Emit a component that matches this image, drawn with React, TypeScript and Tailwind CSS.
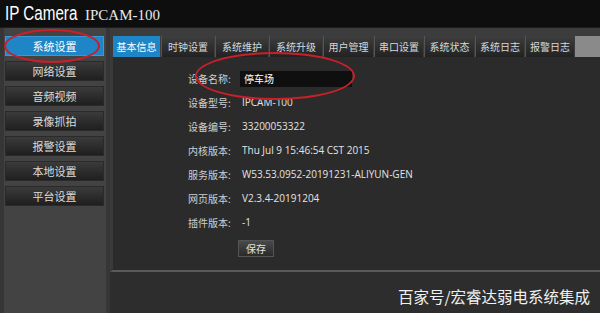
import React from "react";

const menus = ["系统设置", "网络设置", "音频视频", "录像抓拍", "报警设置", "本地设置", "平台设置"];
const tabs = [
  { name: "基本信息", w: "w-[47px]" },
  { name: "时钟设置", w: "w-[53px]" },
  { name: "系统维护", w: "w-[53px]" },
  { name: "系统升级", w: "w-[53px]" },
  { name: "用户管理", w: "w-[50px]" },
  { name: "串口设置", w: "w-[49px]" },
  { name: "系统状态", w: "w-[50px]" },
  { name: "系统日志", w: "w-[49px]" },
  { name: "报警日志", w: "w-[49px]" },
];
const rows = [
  { label: "设备型号:", value: "IPCAM-100" },
  { label: "设备编号:", value: "33200053322" },
  { label: "内核版本:", value: "Thu Jul 9 15:46:54 CST 2015" },
  { label: "服务版本:", value: "W53.53.0952-20191231-ALIYUN-GEN" },
  { label: "网页版本:", value: "V2.3.4-20191204" },
  { label: "插件版本:", value: "-1" },
];

const cjk = "font-['Noto_Sans_CJK_SC',sans-serif]";

export default function App() {
  return (
    <div className="relative w-[600px] h-[313px] overflow-hidden bg-[#2d2d2d] flex flex-col">
      {/* Header */}
      <div className="h-[28px] shrink-0 bg-[#0e0e0e] border-b border-[#1c1c1c] flex items-end pb-[4px] pl-[5px]">
        <span className="w-[80px] inline-block whitespace-nowrap origin-left scale-x-[0.76] text-[20px] leading-none text-white font-['Liberation_Sans',sans-serif]">
          IP Camera
        </span>
        <span className="text-[15px] leading-none text-[#e8e8e8] font-['Liberation_Serif',serif]">IPCAM-100</span>
      </div>

      <div className="flex flex-1 min-h-0">
        {/* Sidebar */}
        <div className="w-[110px] shrink-0 bg-[#434343] border-l-[4px] border-r-[4px] border-[#363636] pt-[8px] pl-[1px] pr-[2px] flex flex-col gap-[5px]">
          {menus.map((m, i) => (
            <div
              key={m}
              className={`h-[20px] flex items-center justify-center text-[11px] ${cjk} ${
                i === 0
                  ? "bg-[#1e86c6] text-white border border-[#3a9ad6]"
                  : "bg-gradient-to-b from-[#3b3b3b] to-[#1f1f1f] text-[#dcdcdc] border border-[#2a2a2a]"
              }`}
            >
              {m}
            </div>
          ))}
        </div>

        {/* Main */}
        <div className="flex-1 flex flex-col bg-[#2d2d2d]">
          <div className="h-[29px] shrink-0 bg-[#3c3c3c] flex items-end pl-[3px]">
            {tabs.map((t, i) => (
              <div
                key={t.name}
                className={`${t.w} h-[21px] mr-[1px] flex items-center justify-center text-[10px] ${cjk} ${
                  i === 0
                    ? "bg-[#1e86c6] text-white"
                    : "bg-gradient-to-b from-[#3e3e3e] to-[#222] text-[#d8d8d8] border-l border-[#555]"
                }`}
              >
                {t.name}
              </div>
            ))}
            <div className="flex-1 h-[21px] bg-[#8a8a8a]" />
          </div>

          <div className="h-[215px] shrink-0 bg-[#2b2b2b] border-l-[3px] border-[#3a3a3a] border-b-2 border-b-[#5a5a5a] pt-[13px] pl-[75px]">
            <div className={`flex items-center h-[17px] text-[10px] ${cjk}`}>
              <span className="w-[52px] text-[#cfcfcf]">设备名称:</span>
              <div className="w-[112px] h-[16px] bg-[#0f0f0f] text-white flex items-center px-[4px]">停车场</div>
            </div>
            {rows.map((r) => (
              <div key={r.label} className="flex items-center h-[17px] mt-[7px] text-[10px]">
                <span className={`w-[54px] text-[#cfcfcf] ${cjk}`}>{r.label}</span>
                <span className="text-[#e4e4e4] font-['Open_Sans',sans-serif]">{r.value}</span>
              </div>
            ))}
            <div className="mt-[9px] ml-[50px]">
              <div className={`w-[36px] h-[17px] bg-gradient-to-b from-[#4a4a4a] to-[#2a2a2a] border border-[#555] text-[#e0e0e0] text-[10px] ${cjk} flex items-center justify-center`}>
                保存
              </div>
            </div>
          </div>

          <div className="flex-1 flex items-end justify-end pr-[10px] pb-[9px]">
            <span className={`text-[15.5px] leading-none text-[#f0f0f0] ${cjk}`}>百家号/宏睿达弱电系统集成</span>
          </div>
        </div>
      </div>

      {/* Red annotation ellipses */}
      <div className="absolute left-[4px] top-[29px] w-[96px] h-[34px] rounded-[50%] border-2 border-[#c8202a]" />
      <div className="absolute left-[195px] top-[52px] w-[160px] h-[48px] rounded-[50%] border-2 border-[#c8202a]" />
    </div>
  );
}
